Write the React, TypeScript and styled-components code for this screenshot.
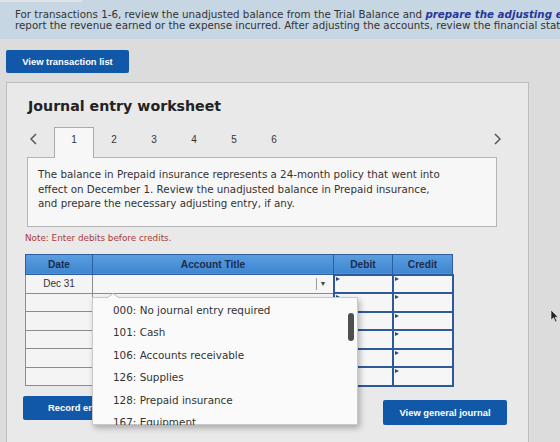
import React from 'react';
import styled, { createGlobalStyle } from 'styled-components';

const GlobalStyle = createGlobalStyle`
  html, body { margin: 0; padding: 0; }
  body {
    background: #dcdcdc;
    font-family: "DejaVu Sans", Verdana, sans-serif;
  }
`;

const Page = styled.div`
  position: relative;
  width: 560px;
  height: 442px;
  overflow: hidden;
  background: #dcdcdc;
`;

const Banner = styled.div`
  height: 39px;
  background: #c7d6e3;
  color: #333;
  font-size: 10.3px;
  line-height: 11px;
`;

const BannerTab = styled.div`
  width: 82px;
  height: 2px;
  background: #e2e5e8;
`;

const BannerText = styled.div`
  padding: 7px 0 0 15px;
  white-space: nowrap;
`;

const Emph = styled.span`
  color: #27379a;
  font-weight: bold;
  font-style: italic;
`;

const BlueButton = styled.button<{ $width: number; $height: number; $top?: number }>`
  width: ${p => p.$width}px;
  height: ${p => p.$height}px;
  margin-top: ${p => p.$top ?? 0}px;
  padding: 0;
  border: none;
  border-radius: 2px;
  background: #1159a8;
  color: #fff;
  font: bold 9.4px "Liberation Sans", Arial, sans-serif;
  white-space: nowrap;
`;

const ToolRow = styled.div`
  padding: 11px 0 0 6px;
`;

const Panel = styled.div`
  box-sizing: border-box;
  width: 523px;
  height: 360px;
  margin: 9px 0 0 6px;
  padding: 15px 0 0 18px;
  border: 1px solid #bcbcbc;
  border-bottom: none;
  background: #e9e9e9;
`;

const Title = styled.h1`
  margin: 0 0 0 3px;
  font-size: 14.2px;
  line-height: 16px;
  font-weight: bold;
  color: #222;
`;

const TabRow = styled.div`
  position: relative;
  z-index: 1;
  display: flex;
  align-items: flex-start;
  width: 475px;
  height: 30px;
  margin: 13px 0 0 3px;
`;

const Chevron = styled.div<{ $right?: boolean }>`
  display: flex;
  align-items: center;
  height: 24px;
  width: ${p => (p.$right ? 'auto' : '26px')};
  margin-left: ${p => (p.$right ? 'auto' : '0')};
  padding: ${p => (p.$right ? '0 2px 0 0' : '0 0 0 2px')};
  box-sizing: border-box;
`;

const Tab = styled.div<{ $active?: boolean }>`
  box-sizing: border-box;
  width: 40px;
  height: 31px;
  padding-top: 6px;
  text-align: center;
  font: 10px/12px "Liberation Sans", Arial, sans-serif;
  color: #333;
  border: 1px solid ${p => (p.$active ? '#acacac' : 'transparent')};
  border-bottom: none;
  background: ${p => (p.$active ? '#f7f7f7' : 'transparent')};
`;

const ContentBox = styled.div`
  box-sizing: border-box;
  width: 470px;
  margin-left: 2px;
  padding: 9px 10px 15px 10px;
  border: 1px solid #b5b5b5;
  background: #f7f7f7;
  font-size: 10.3px;
  line-height: 14.5px;
  color: #333;
  white-space: nowrap;
`;

const Note = styled.div`
  margin-top: 6px;
  font-size: 8.8px;
  line-height: 10px;
  color: #a83a3a;
`;

const TableWrap = styled.div`
  position: relative;
  margin-top: 11px;
  width: 423px;
`;

const Grid = styled.table`
  width: 423px;
  border-collapse: collapse;
  table-layout: fixed;
  font-family: "Liberation Sans", Arial, sans-serif;
`;

const HeadCell = styled.th<{ $w: number }>`
  width: ${p => p.$w}px;
  height: 19px;
  padding: 0;
  border: 1px solid #2d5f9e;
  background: linear-gradient(#5b9ee0, #3f86d0);
  color: #1b2c4e;
  font-size: 10.2px;
  font-weight: bold;
  text-align: center;
`;

const DateCell = styled.td`
  height: 16.5px;
  padding: 0;
  border: 1px solid #8c8c8c;
  background: #f4f4f4;
  color: #333;
  font-size: 10px;
  line-height: 12px;
  text-align: center;
`;

const AccountCell = styled.td<{ $focus?: boolean }>`
  height: 16.5px;
  padding: 0;
  border: 1px ${p => (p.$focus ? 'dotted #3560a8' : 'solid #8c8c8c')};
  background: #f6f6f6;
`;

const SelectBox = styled.div`
  display: flex;
  justify-content: flex-end;
  height: 16px;
`;

const SelectArrow = styled.div`
  display: flex;
  align-items: center;
  justify-content: center;
  width: 13px;
  margin: 2px 3px 2px 0;
  border-left: 1px solid #9a9a9a;
  color: #444;
  font-size: 7px;
`;

const AmountCell = styled.td`
  position: relative;
  height: 16.5px;
  padding: 0;
  border: 2px solid #2d5a9b;
  background: #f6f6f6;

  &::before {
    content: "";
    position: absolute;
    left: 1px;
    top: 1px;
    border-style: solid;
    border-width: 2.5px 0 2.5px 4px;
    border-color: transparent transparent transparent #24498a;
  }
`;

const Dropdown = styled.div`
  position: absolute;
  left: 67px;
  top: 43px;
  z-index: 5;
  width: 266px;
  height: 128px;
  background: #fafafa;
  border: 1px solid #c9c9c9;
  box-sizing: border-box;
  box-shadow: 2px 3px 6px rgba(0, 0, 0, 0.28);

  &::before,
  &::after {
    content: "";
    position: absolute;
    left: 13px;
    border-style: solid;
    border-color: transparent transparent #bcbcbc transparent;
    border-width: 0 7px 5px 7px;
    top: -5px;
  }
  &::after {
    top: -4px;
    border-bottom-color: #fafafa;
  }
`;

const OptionList = styled.div`
  height: 100%;
  overflow: hidden;
  padding-top: 1px;
`;

const Option = styled.div`
  height: 22.5px;
  padding-left: 20px;
  font-size: 10.4px;
  line-height: 22.5px;
  color: #333;
  white-space: nowrap;
`;

const ScrollThumb = styled.div`
  position: absolute;
  right: 3px;
  top: 15px;
  width: 6px;
  height: 28px;
  border-radius: 3px;
  background: #4f4f4f;
`;

const ButtonRow = styled.div`
  display: flex;
  justify-content: space-between;
  align-items: flex-start;
  width: 484px;
  margin-left: -2px;
`;

const Pointer = styled.svg`
  position: absolute;
  left: 550px;
  top: 309px;
`;

const accounts = [
  '000: No journal entry required',
  '101: Cash',
  '106: Accounts receivable',
  '126: Supplies',
  '128: Prepaid insurance',
  '167: Equipment',
  '168: Accumulated depreciation',
];

const ChevronIcon = ({ right }: { right?: boolean }) => (
  <svg width="7" height="12" viewBox="0 0 7 12">
    <path
      d={right ? 'M1 1 L6 6 L1 11' : 'M6 1 L1 6 L6 11'}
      fill="none"
      stroke="#555"
      strokeWidth="1.5"
    />
  </svg>
);

const App = () => {
  const rows = [0, 1, 2, 3, 4, 5];
  return (
    <Page>
      <GlobalStyle />
      <Banner>
        <BannerTab />
        <BannerText>
          For transactions 1-6, review the unadjusted balance from the Trial Balance and{' '}
          <Emph>prepare the adjusting entries</Emph>
          <br />
          report the revenue earned or the expense incurred. After adjusting the accounts, review the financial statements.
        </BannerText>
      </Banner>

      <ToolRow>
        <BlueButton $width={123} $height={23}>View transaction list</BlueButton>
      </ToolRow>

      <Panel>
        <Title>Journal entry worksheet</Title>

        <TabRow>
          <Chevron><ChevronIcon /></Chevron>
          {[1, 2, 3, 4, 5, 6].map(n => (
            <Tab key={n} $active={n === 1}>{n}</Tab>
          ))}
          <Chevron $right><ChevronIcon right /></Chevron>
        </TabRow>

        <ContentBox>
          The balance in Prepaid insurance represents a 24-month policy that went into
          <br />
          effect on December 1. Review the unadjusted balance in Prepaid insurance,
          <br />
          and prepare the necessary adjusting entry, if any.
        </ContentBox>

        <Note>Note: Enter debits before credits.</Note>

        <TableWrap>
          <Grid>
            <thead>
              <tr>
                <HeadCell $w={66}>Date</HeadCell>
                <HeadCell $w={240}>Account Title</HeadCell>
                <HeadCell $w={58}>Debit</HeadCell>
                <HeadCell $w={59}>Credit</HeadCell>
              </tr>
            </thead>
            <tbody>
              {rows.map(i => (
                <tr key={i}>
                  <DateCell>{i === 0 ? 'Dec 31' : ''}</DateCell>
                  <AccountCell $focus={i === 0}>
                    {i === 0 && (
                      <SelectBox>
                        <SelectArrow>▼</SelectArrow>
                      </SelectBox>
                    )}
                  </AccountCell>
                  <AmountCell />
                  <AmountCell />
                </tr>
              ))}
            </tbody>
          </Grid>

          <Dropdown>
            <OptionList>
              {accounts.map(a => (
                <Option key={a}>{a}</Option>
              ))}
            </OptionList>
            <ScrollThumb />
          </Dropdown>
        </TableWrap>

        <ButtonRow>
          <BlueButton $width={108} $height={24} $top={9}>Record entry</BlueButton>
          <BlueButton $width={124} $height={25} $top={13}>View general journal</BlueButton>
        </ButtonRow>
      </Panel>

      <Pointer width="9" height="14" viewBox="0 0 9 14">
        <path d="M1 1 L1 11 L3.5 8.8 L5.5 13 L7 12.3 L5 8.2 L8.2 8.2 Z" fill="#222" stroke="#eee" strokeWidth="0.6" />
      </Pointer>
    </Page>
  );
};

export default App;
